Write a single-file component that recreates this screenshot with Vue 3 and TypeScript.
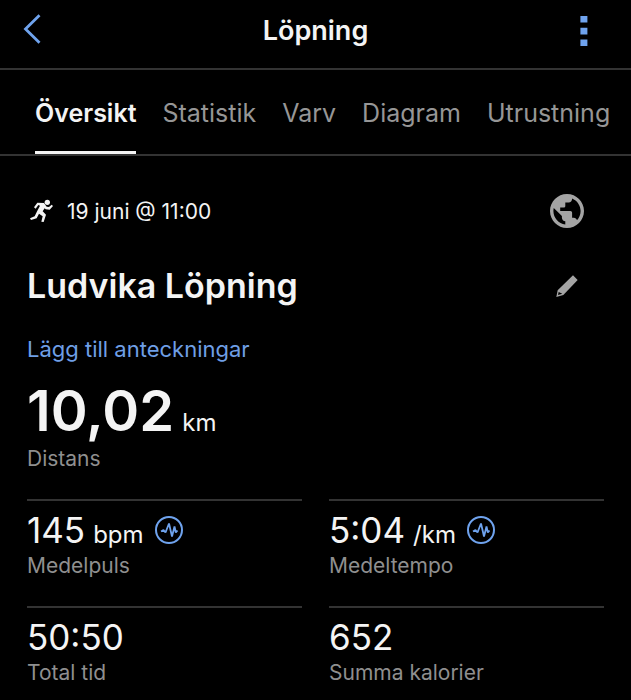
<script setup lang="ts">
import { ref } from 'vue'

interface Stat {
  id: string
  value: string
  unit?: string
  label: string
  chart?: boolean
}

const tabs: string[] = ['Översikt', 'Statistik', 'Varv', 'Diagram', 'Utrustning']
const activeTab = ref<string>('Översikt')

const stats: Stat[] = [
  { id: 'pulse', value: '145', unit: 'bpm', label: 'Medelpuls', chart: true },
  { id: 'pace', value: '5:04', unit: '/km', label: 'Medeltempo', chart: true },
  { id: 'time', value: '50:50', label: 'Total tid' },
  { id: 'calories', value: '652', label: 'Summa kalorier' },
]
</script>

<template>
  <div class="screen">
    <header class="topbar">
      <button class="icon-button back" type="button" aria-label="Tillbaka">
        <svg width="18" height="30" viewBox="0 0 18 30" fill="none" stroke="currentColor" stroke-width="2.8">
          <path d="M16.5 1.2 2.5 15l14 13.8" />
        </svg>
      </button>
      <h1 class="title">Löpning</h1>
      <button class="icon-button more" type="button" aria-label="Mer">
        <svg width="8" height="30" viewBox="0 0 8 30" fill="currentColor">
          <path d="M.4 0h7v6.6h-7zM.4 11.8h7v6.6h-7zM.4 23.4h7V30h-7z" />
        </svg>
      </button>
    </header>

    <nav class="tabs">
      <button
        v-for="tab in tabs"
        :key="tab"
        type="button"
        class="tab"
        :class="{ active: tab === activeTab }"
        @click="activeTab = tab"
      >
        {{ tab }}
      </button>
    </nav>

    <main class="content">
      <div class="row meta">
        <svg class="runner" width="24" height="24" viewBox="0 0 72 72" fill="currentColor">
          <circle cx="55" cy="10" r="8" />
          <path d="M25 11 45 12 53 23 60 24 68 17 72 21 62 32 50 31 47 28 41 37 51 47 44 69 37 68 41 52 30 44 23 58 6 63 3 58 17 52 25 35 33 20 28 18 20 29 15 25Z" />
        </svg>
        <span class="date">19 juni @ 11:00</span>
        <button class="icon-button globe" type="button" aria-label="Synlighet">
          <svg width="34" height="34" viewBox="2 2 20 20" fill="currentColor">
            <path d="M12 2C6.48 2 2 6.48 2 12s4.48 10 10 10 10-4.48 10-10S17.52 2 12 2zm-1 17.93c-3.95-.49-7-3.85-7-7.93 0-.62.08-1.21.21-1.79L9 15v1c0 1.1.9 2 2 2v1.93zm6.9-2.54c-.26-.81-1-1.39-1.9-1.39h-1v-3c0-.55-.45-1-1-1H8v-2h2c.55 0 1-.45 1-1V7h2c1.1 0 2-.9 2-2v-.41c2.93 1.19 5 4.06 5 7.41 0 2.08-.8 3.97-2.1 5.39z" />
          </svg>
        </button>
      </div>

      <div class="row heading">
        <h2 class="name">Ludvika Löpning</h2>
        <button class="icon-button pencil" type="button" aria-label="Redigera namn">
          <svg width="22" height="22" viewBox="0 0 66 66" fill="currentColor" fill-rule="evenodd">
            <path d="M51 1 65 15 22 60 1 66 5 46ZM8 51 6 60 19 56Z" />
          </svg>
        </button>
      </div>

      <a class="notes" href="#anteckningar">Lägg till anteckningar</a>

      <section class="distance">
        <p class="figure"><span class="big">10,02</span><span class="unit">km</span></p>
        <p class="label">Distans</p>
      </section>

      <section class="grid">
        <div v-for="stat in stats" :key="stat.id" class="stat">
          <p class="figure">
            <span class="value">{{ stat.value }}</span>
            <span v-if="stat.unit" class="unit">{{ stat.unit }}</span>
            <button v-if="stat.chart" class="icon-button chart" type="button" :aria-label="`Diagram för ${stat.label}`">
              <svg width="28" height="28" viewBox="0 0 28 28" fill="none" stroke="currentColor">
                <circle cx="14" cy="14" r="13" stroke-width="2" />
                <path d="M6 15.5 8.5 14 10.5 16.5 14 7.5 17 20.5 19.5 10.5 20.8 16.5 22.5 14.5" stroke-width="1.8" stroke-linejoin="bevel" />
              </svg>
            </button>
          </p>
          <p class="label">{{ stat.label }}</p>
        </div>
      </section>
    </main>
  </div>
</template>

<style>
body {
  margin: 0;
  background: #000;
}
</style>

<style scoped>
.screen {
  min-height: 100vh;
  background: #000;
  color: #f4f4f4;
  font-family: Inter, "Liberation Sans", sans-serif;
}

h1,
h2,
p {
  margin: 0;
}

button {
  margin: 0;
  padding: 0;
  border: 0;
  background: none;
  color: inherit;
  font: inherit;
  cursor: pointer;
}

.icon-button {
  display: flex;
}

.topbar {
  display: grid;
  grid-template-columns: 1fr auto 1fr;
  align-items: center;
  height: 62px;
  padding: 0 43px 6px 23px;
  border-bottom: 2px solid #333;
}

.back,
.more {
  color: #6fa3ee;
}

.back {
  padding-bottom: 4px;
}

.more {
  justify-self: end;
}

.title {
  padding-left: 20px;
  font-size: 27px;
  line-height: 34px;
  font-weight: 600;
}

.tabs {
  display: flex;
  gap: 26px;
  padding: 0 20px 0 35px;
  border-bottom: 2px solid #333;
}

.tab {
  padding: 27px 0 22px;
  border-bottom: 3px solid transparent;
  color: #969696;
  font-size: 25px;
  line-height: 32px;
  white-space: nowrap;
}

.tab.active {
  border-bottom-color: #f4f4f4;
  color: #f4f4f4;
  font-weight: 600;
}

.content {
  padding: 38px 27px 0;
}

.row {
  display: flex;
  align-items: center;
}

.meta {
  height: 34px;
  padding: 0 20px 0 2px;
}

.runner {
  margin-right: 14px;
}

.date {
  padding-top: 2px;
  font-size: 21px;
  line-height: 28px;
}

.globe,
.pencil {
  margin-left: auto;
  color: #a4a4a4;
}

.heading {
  margin-top: 36px;
  padding-right: 26px;
}

.name {
  font-size: 34px;
  line-height: 44px;
  font-weight: 600;
}

.notes {
  display: block;
  width: fit-content;
  margin-top: 27px;
  color: #6f9fe6;
  font-size: 22px;
  line-height: 28px;
  text-decoration: none;
}

.figure {
  display: flex;
  align-items: baseline;
  gap: 8px;
}

.distance {
  padding: 14px 0 26px;
}

.big {
  font-size: 56px;
  line-height: 68px;
  font-weight: 600;
}

.unit {
  font-size: 24px;
}

.label {
  color: #8f8f8f;
  font-size: 21px;
  line-height: 28px;
}

.grid {
  display: grid;
  grid-template-columns: 1fr 1fr;
  column-gap: 27px;
}

.stat {
  padding: 7px 0 26px;
  border-top: 2px solid #333;
}

.value {
  font-size: 35px;
  line-height: 44px;
}

.chart {
  align-self: center;
  margin-left: 3px;
  color: #6fa3ee;
}
</style>
